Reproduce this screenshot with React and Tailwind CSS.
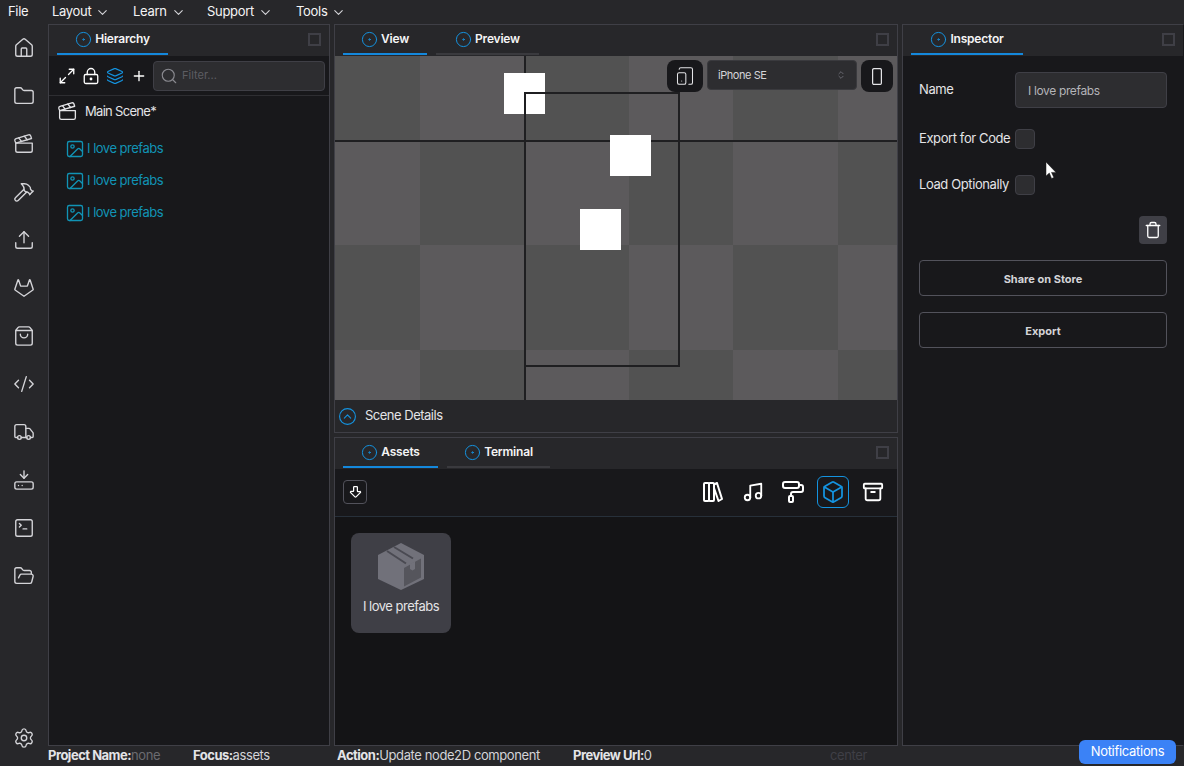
import {
  House, Folder, Clapperboard, Hammer, Upload, Gitlab, ShoppingBag, CodeXml, Truck, HardDriveDownload,
  SquareTerminal, FolderOpen, Settings, ChevronDown, CircleDot, Maximize2, LockKeyhole, Layers, Plus, Search,
  Image, TabletSmartphone, ChevronsUpDown, CircleChevronUp, ArrowBigDown, Music,
  PaintRoller, Box, Archive, Trash,
} from 'lucide-react'

const menus = [
  { label: 'Layout', w: 'w-[81px]' },
  { label: 'Learn', w: 'w-[74px]' },
  { label: 'Support', w: 'w-[89px]' },
  { label: 'Tools', w: 'w-[60px]' },
]

const railIcons = [House, Folder, Clapperboard, Hammer, Upload, Gitlab, ShoppingBag, CodeXml, Truck, HardDriveDownload, SquareTerminal, FolderOpen]

const colWidths = 'grid-cols-[85px_105px_104px_104px_105px_61px]'
const rowHeights = 'grid-rows-[85px_104px_105px_50px]'

function Tab({ label, active, w }) {
  return (
    <div className={`${w} h-[30px] flex items-center justify-center gap-[3px] border-b-2 ${active ? 'border-[#1488dc]' : 'border-b-[#3a3a3e]'}`}>
      <CircleDot size={17} strokeWidth={1.4} className="text-[#1493e0]" />
      <span className="text-[12px] font-semibold text-[#f4f4f5] tracking-[-0.2px]">{label}</span>
    </div>
  )
}

function PanelHeader({ children }) {
  return (
    <div className="h-[31px] shrink-0 bg-[#27272a] pl-2 pr-2 flex items-start justify-between">
      <div className="flex gap-[9px]">{children}</div>
      <div className="mt-[8px] w-[13px] h-[13px] border-2 border-[#3f3f46]" />
    </div>
  )
}

function Checker() {
  const cells = []
  for (let r = 0; r < 4; r++) {
    for (let c = 0; c < 6; c++) {
      cells.push(<div key={`${r}-${c}`} className={(r + c) % 2 === 0 ? 'bg-[#525252]' : 'bg-[#5c5a5c]'} />)
    }
  }
  return <div className={`grid h-full ${colWidths} ${rowHeights}`}>{cells}</div>
}

function Square({ className }) {
  return <div className={`absolute w-[41px] h-[41px] bg-white ${className}`} />
}

function Row({ label, children }) {
  return (
    <div className="flex items-center gap-[5px] h-5 text-[13px] text-[#e4e4e7] tracking-[-0.4px] whitespace-nowrap">
      <span className="w-[91px]">{label}</span>
      {children}
    </div>
  )
}

function Stat({ label, value, w, dim }) {
  return (
    <div className={`${w} text-[13px] tracking-[-0.5px] whitespace-nowrap`}>
      <span className="font-bold text-[#e4e4e7]">{label}:</span>
      <span className={`tracking-[-0.4px] ${dim ? 'text-[#6b6b70]' : 'text-[#d4d4d8]'}`}>{value}</span>
    </div>
  )
}

export default function App() {
  return (
    <div className="relative w-[1184px] h-[766px] overflow-hidden bg-[#27272a] text-white flex flex-col font-['Inter','Liberation_Sans',sans-serif]">
      <div className="h-6 shrink-0 flex items-center pl-2 text-[13px] text-[#f4f4f5] tracking-[-0.3px]">
        <span className="w-[44px]">File</span>
        {menus.map(m => (
          <div key={m.label} className={`${m.w} flex items-center gap-[4px]`}>
            {m.label}
            <ChevronDown size={15} strokeWidth={1.75} className="text-[#d4d4d8]" />
          </div>
        ))}
      </div>

      <div className="flex flex-1 min-h-0">
        <div className="w-12 shrink-0 pr-px flex flex-col items-center text-[#d4d4d8]">
          {railIcons.map((Icon, i) => (
            <div key={i} className="h-12 flex items-center justify-center">
              <Icon size={22} strokeWidth={1.5} />
            </div>
          ))}
          <div className="mt-auto mb-1 h-12 flex items-center justify-center">
            <Settings size={22} strokeWidth={1.5} />
          </div>
        </div>

        <div className="flex-1 min-w-0 flex flex-col">
          <div className="h-[722px] flex gap-1">
            <div className="w-[282px] flex flex-col border border-[#3f3f46] bg-[#18181b]">
              <PanelHeader>
                <Tab label="Hierarchy" active w="w-[111px]" />
              </PanelHeader>
              <div className="h-10 shrink-0 flex items-center pl-[9px] pr-1 border-b border-[#2e2e32]">
                <Maximize2 size={18} strokeWidth={1.75} className="text-white" />
                <LockKeyhole size={18} strokeWidth={1.75} className="ml-[6px] text-white" />
                <Layers size={18} strokeWidth={1.5} className="ml-[6px] text-[#1493e0]" />
                <Plus size={16} strokeWidth={2} className="ml-[7px] text-white" />
                <div className="ml-[6px] flex-1 h-[30px] flex items-center gap-1 pl-[6px] bg-[#2d2d30] border border-[#3f3f46] rounded">
                  <Search size={18} strokeWidth={1.5} className="text-[#8a8a90]" />
                  <span className="text-[11px] text-[#5d5d63]">Filter...</span>
                </div>
              </div>
              <div className="h-[31px] flex items-center pl-2 gap-[7px]">
                <Clapperboard size={21} strokeWidth={1.5} className="text-[#e4e4e7]" />
                <span className="text-[13px] text-[#e4e4e7] tracking-[-0.7px]">Main Scene*</span>
              </div>
              <div className="pt-[6px] pl-[16px] flex flex-col">
                {[0, 1, 2].map(i => (
                  <div key={i} className="h-8 flex items-center gap-[2px] text-[#1193b5]">
                    <Image size={20} strokeWidth={1.6} />
                    <span className="text-[13px] tracking-[-0.5px]">I love prefabs</span>
                  </div>
                ))}
              </div>
            </div>

            <div className="w-[564px] flex flex-col gap-1">
              <div className="h-[409px] flex flex-col border border-[#3f3f46] bg-[#27272a]">
                <PanelHeader>
                  <Tab label="View" active w="w-[84px]" />
                  <Tab label="Preview" w="w-[103px]" />
                </PanelHeader>
                <div className="relative h-[344px] shrink-0 overflow-hidden">
                  <Checker />
                  <div className="absolute left-[189px] top-0 bottom-0 w-[2px] bg-[#1f1f21]" />
                  <div className="absolute left-0 right-0 top-[84px] h-[2px] bg-[#1f1f21]" />
                  <Square className="left-[169px] top-[17px]" />
                  <Square className="left-[275px] top-[79px]" />
                  <Square className="left-[245px] top-[153px]" />
                  <div className="absolute left-[189px] top-[36px] w-[156px] h-[275px] border-2 border-[#1f1f21]" />
                  <div className="absolute left-[332px] top-[4px] w-9 h-8 flex items-center justify-center bg-[#18181b] rounded-lg">
                    <TabletSmartphone size={20} strokeWidth={1.25} className="text-[#e4e4e7]" />
                  </div>
                  <div className="absolute left-[372px] top-[4px] w-[150px] h-[30px] flex items-center justify-between pl-[10px] pr-[10px] bg-[#2d2d30] border border-[#3a3a3e] rounded">
                    <span className="text-[11px] text-[#d4d4d8] tracking-[-0.45px]">iPhone SE</span>
                    <ChevronsUpDown size={10} className="text-[#71717a]" />
                  </div>
                  <div className="absolute left-[526px] top-[4px] w-8 h-8 flex items-center justify-center bg-[#18181b] rounded-lg">
                    <svg width="10" height="17" viewBox="0 0 10 17" fill="none" stroke="#e4e4e7" strokeWidth="1.25">
                      <rect x="0.6" y="0.6" width="8.8" height="15.8" rx="1.5" />
                    </svg>
                  </div>
                </div>
                <div className="flex-1 flex items-center pl-[3px] gap-[8px]">
                  <CircleChevronUp size={19} strokeWidth={1.4} className="text-[#1493e0]" />
                  <span className="text-[13px] text-[#e4e4e7] tracking-[-0.5px]">Scene Details</span>
                </div>
              </div>

              <div className="flex-1 flex flex-col border border-[#3f3f46] bg-[#141416]">
                <PanelHeader>
                  <Tab label="Assets" active w="w-[95px]" />
                  <Tab label="Terminal" w="w-[103px]" />
                </PanelHeader>
                <div className="h-12 shrink-0 pb-[2px] flex items-center justify-between pl-2 pr-[4px] bg-[#18181b] border-b border-[#27303a]">
                  <div className="w-6 h-6 flex items-center justify-center border border-[#52525b] rounded">
                    <ArrowBigDown size={15} strokeWidth={2} className="text-white" />
                  </div>
                  <div className="flex items-center text-white">
                    <div className="w-10 h-8 flex items-center justify-center">
                      <svg width="20" height="20" viewBox="0 0 20 20" fill="none" stroke="currentColor" strokeWidth="2" strokeLinejoin="round">
                        <rect x="1" y="1" width="5" height="18" rx="1" />
                        <rect x="6" y="1" width="5" height="18" rx="1" />
                        <path d="M11 2.5 14 1 19 17 15.5 19 11 6" />
                      </svg>
                    </div>
                    <div className="w-10 h-8 flex items-center justify-center"><Music size={22} strokeWidth={2} /></div>
                    <div className="w-10 h-8 flex items-center justify-center"><PaintRoller size={24} strokeWidth={2} /></div>
                    <div className="w-8 h-8 mx-1 flex items-center justify-center border border-[#1493e0] rounded-md text-[#1493e0]"><Box size={24} strokeWidth={1.75} /></div>
                    <div className="w-10 h-8 flex items-center justify-center"><Archive size={22} strokeWidth={2} /></div>
                  </div>
                </div>
                <div className="pl-4 pt-4">
                  <div className="w-[100px] h-[100px] flex flex-col items-center pt-[10px] bg-[#3f3f46] rounded-lg">
                    <svg width="46" height="47" viewBox="0 0 46 47">
                      <path fill="#71717a" d="M23 0 46 12V36L23 47 0 36V12Z" />
                      <path fill="#55555c" d="M26 25 43 15.5V34.5L26 43.5Z" />
                      <path fill="#71717a" d="M32 21 37 18.5V26L34.5 27.5 32 26Z" />
                      <path stroke="#4a4a52" strokeWidth="2" fill="none" d="M16 4 35 15.5M9 8 28 20.5" />
                    </svg>
                    <span className="mt-[7px] text-[13px] text-[#e4e4e7] tracking-[-0.5px]">I love prefabs</span>
                  </div>
                </div>
              </div>
            </div>

            <div className="w-[282px] flex flex-col border border-[#3f3f46] border-r-transparent bg-[#18181b]">
              <PanelHeader>
                <Tab label="Inspector" active w="w-[112px]" />
              </PanelHeader>
              <div className="pt-4 pl-4 pr-4 flex flex-col">
                <div className="flex items-start h-9 text-[13px] text-[#e4e4e7] tracking-[-0.4px]">
                  <span className="w-[96px] mt-[8px]">Name</span>
                  <div className="w-[152px] h-9 flex items-center pl-3 pt-px bg-[#2d2d30] border border-[#3f3f46] rounded text-[12px] tracking-[-0.35px] text-[#b4b4b8]">I love prefabs</div>
                </div>
                <div className="mt-[21px]">
                  <Row label="Export for Code"><div className="w-5 h-5 bg-[#2d2d30] border border-[#3f3f46] rounded" /></Row>
                </div>
                <div className="mt-[26px]">
                  <Row label="Load Optionally"><div className="w-5 h-5 bg-[#2d2d30] border border-[#3f3f46] rounded" /></Row>
                </div>
                <div className="mt-[21px] self-end w-7 h-7 flex items-center justify-center bg-[#3f3f46] rounded">
                  <Trash size={18} strokeWidth={1.75} className="text-white" />
                </div>
                <div className="mt-4 h-9 pt-[2px] flex items-center justify-center border border-[#52525b] rounded text-[11px] font-bold text-[#d4d4d8]">Share on Store</div>
                <div className="mt-4 h-9 pt-[2px] flex items-center justify-center border border-[#52525b] rounded text-[11px] font-bold text-[#d4d4d8]">Export</div>
              </div>
            </div>
          </div>

          <div className="flex-1 flex items-center">
            <Stat label="Project Name" value="none" dim w="w-[145px]" />
            <Stat label="Focus" value="assets" w="w-[144px]" />
            <Stat label="Action" value="Update node2D component" w="w-[236px]" />
            <Stat label="Preview Url" value="0" w="w-[257px]" />
            <span className="text-[13px] tracking-[-0.4px] text-[#3f3f46]">center</span>
          </div>
        </div>
      </div>

      <div className="absolute left-[1079px] top-[740px] w-[97px] h-6 flex items-center justify-center bg-[#3b82f6] rounded-md text-[13px] text-white tracking-[-0.3px]">
        Notifications
      </div>
      <svg width="13" height="19" viewBox="0 0 13 19" className="absolute left-[1045px] top-[161px]">
        <path fill="white" stroke="#18181b" strokeWidth="0.5" d="M1 1V15L4.3 12 6.6 17.5 8.8 16.5 6.5 11.4H11Z" />
      </svg>
    </div>
  )
}
